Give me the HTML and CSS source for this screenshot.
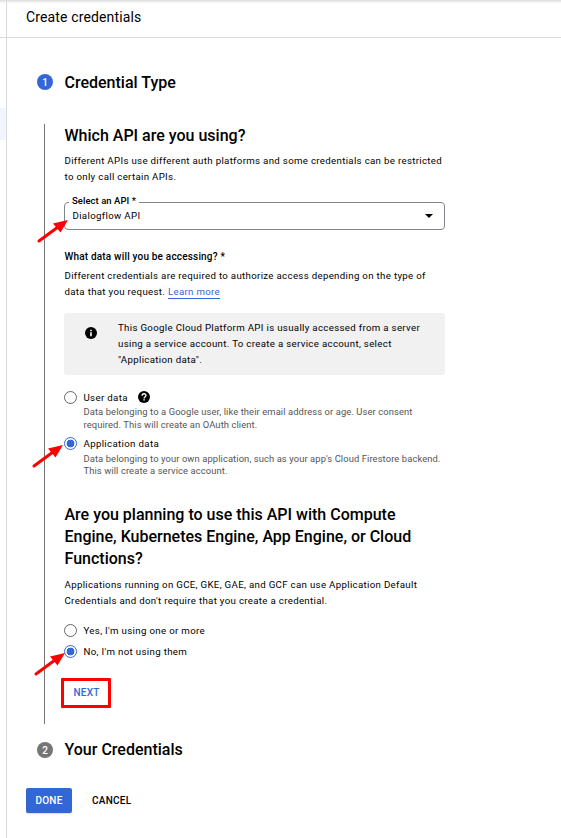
FILE: index.html
```html
<!DOCTYPE html>
<html lang="en">
<head>
<meta charset="utf-8">
<title>Create credentials</title>
<link rel="stylesheet" href="styles.css">
</head>
<body>
<div class="app">
  <aside class="rail"><div class="rail-head"></div><div class="rail-active"></div></aside>
  <main class="main">
    <header class="topbar"><h1>Create credentials</h1></header>
    <div class="step-head"><span class="badge">1</span><h2>Credential Type</h2></div>
    <section class="panel">
      <h2>Which API are you using?</h2>
      <p class="copy intro">Different APIs use different auth platforms and some credentials can be restricted<br>to only call certain APIs.</p>
      <div class="select">
        <span class="select-label">Select an API *</span>
        <span class="select-value">Dialogflow API</span>
        <svg class="caret" width="8" height="4" viewBox="0 0 8 4"><path d="M0 0h8L4 4z"/></svg>
        <svg class="arrow" width="34" height="27" viewBox="0 0 34 27"><path class="shaft" d="M3 24 22 10"/><path d="M32 3 24.500 15.500 17 6.500z"/></svg>
      </div>
      <h3>What data will you be accessing? *</h3>
      <p class="copy">Different credentials are required to authorize access depending on the type of<br>data that you request. <a class="link">Learn more</a></p>
      <div class="notice">
        <svg class="info" width="12" height="12" viewBox="0 0 12 12"><circle cx="6" cy="6" r="6"/><path fill="#fff" d="M5.200 2.700h1.600v1.500H5.200zM5.200 5.200h1.600v4H5.200z"/></svg>
        <p class="copy">This Google Cloud Platform API is usually accessed from a server<br>using a service account. To create a service account, select<br>"Application data".</p>
      </div>
      <div class="option">
        <span class="radio"></span>
        <div class="option-body">
          <div class="option-title">User data
            <svg class="help" width="12" height="12" viewBox="0 0 12 12"><circle cx="6" cy="6" r="6"/><path fill="none" stroke="#fff" stroke-width="1.300" d="M4.100 4.700C4.100 2.100 8 2.200 8 4.500 8 5.800 6.100 5.700 6.100 7.400"/><path fill="#fff" d="M5.400 8.200h1.400v1.400H5.400z"/></svg>
          </div>
          <p class="hint">Data belonging to a Google user, like their email address or age. User consent<br>required. This will create an OAuth client.</p>
        </div>
      </div>
      <div class="option second">
        <span class="radio on"></span>
        <div class="option-body">
          <div class="option-title">Application data</div>
          <p class="hint">Data belonging to your own application, such as your app's Cloud Firestore backend.<br>This will create a service account.</p>
        </div>
        <svg class="arrow" width="34" height="27" viewBox="0 0 34 27"><path class="shaft" d="M3 24 22 10"/><path d="M32 3 24.500 15.500 17 6.500z"/></svg>
      </div>
      <h2 class="question">Are you planning to use this API with Compute<br>Engine, Kubernetes Engine, App Engine, or Cloud<br>Functions?</h2>
      <p class="copy">Applications running on GCE, GKE, GAE, and GCF can use Application Default<br>Credentials and don't require that you create a credential.</p>
      <div class="option yes"><span class="radio"></span><div class="option-title">Yes, I'm using one or more</div></div>
      <div class="option no"><span class="radio on"></span><div class="option-title">No, I'm not using them</div>
        <svg class="arrow" width="34" height="27" viewBox="0 0 34 27"><path class="shaft" d="M3 24 22 10"/><path d="M32 3 24.500 15.500 17 6.500z"/></svg>
      </div>
      <button class="next">NEXT</button>
    </section>
    <div class="step-head last"><span class="badge idle">2</span><h2>Your Credentials</h2></div>
    <div class="actions"><button class="done">DONE</button><button class="cancel">CANCEL</button></div>
  </main>
</div>
</body>
</html>
```
FILE: styles.css
```css
* { box-sizing: border-box; }
body { margin: 0; background: #fff; color: #000; font-family: Roboto, "Liberation Sans", sans-serif; white-space: nowrap; }
h1, h2, h3, p { margin: 0; }
button { border: 0; padding: 0; background: none; font: 500 10px/16px Roboto, sans-serif; letter-spacing: .25px; }
.app { display: flex; height: 838px; overflow: hidden; background: linear-gradient(#dcdcdc, #f3f3f3 2px, #fff 4px); }
.rail { width: 7px; border-right: 1px solid #dadada; flex: none; }
.rail-head { height: 38px; border-bottom: 1px solid #dadada; }
.rail-active { height: 32px; margin-top: 70px; background: #f0f5ff; }
.main { flex: 1; }
.topbar { height: 38px; border-bottom: 1px solid #dadada; padding: 7px 0 0 19px; }
.topbar h1 { font-size: 14px; line-height: 20px; font-weight: 400; letter-spacing: .14px; }
h2 { font-size: 16px; line-height: 22px; font-weight: 500; }
.step-head { display: flex; align-items: center; height: 22px; margin: 33px 0 0 30px; gap: 11.500px; }
.step-head h2 { padding-top: 2px; }
.step-head.last { margin-top: 15px; }
.step-head.last h2 { padding-top: 0; }
.badge { width: 16px; height: 16px; border-radius: 50%; background: #3367d6; color: #fff; font-size: 10px; font-weight: 500; line-height: 17px; text-align: center; }
.badge.idle { background: #757575; }
.step-head.last .badge { margin-top: -1px; }
.panel { width: 401px; height: 600px; margin: 31px 0 0 37px; border-left: 1px solid #757575; padding: 1px 0 0 19px; }
.panel > h2 { padding-left: .5px; }
.copy { padding-left: .5px; font-size: 9.700px; line-height: 16px; letter-spacing: .315px; }
.intro { margin-top: 6px; }
.select { position: relative; display: flex; justify-content: space-between; align-items: center; height: 28px; margin-top: 17px; padding: 0 11px 0 7.500px; border: 1px solid #80868b; border-radius: 4px; }
.select-label { position: absolute; top: -9px; left: 4px; padding: 0 3px; background: #fff; font-size: 9.500px; line-height: 14px; font-weight: 500; letter-spacing: .05px; }
.select-value { font-size: 9.700px; line-height: 16px; letter-spacing: .33px; }
.arrow { position: absolute; fill: #f00; }
.shaft { stroke: #f00; stroke-width: 3; stroke-linecap: round; }
.select .arrow { left: -29px; top: 14px; }
h3 { margin-top: 19px; margin-bottom: 3px; padding-left: .5px; font-size: 10px; line-height: 16px; font-weight: 500; letter-spacing: .18px; }
.link { display: inline-block; height: 14px; line-height: 14px; color: #3367d6; border-bottom: 1px solid #3367d6; }
.notice { display: flex; height: 62px; margin-top: 13px; padding: 7px 0 0 21px; gap: 20.500px; background: #f1f1f1; border-radius: 3px; }
.info { margin-top: 7px; }
.option { position: relative; display: flex; gap: 6.500px; margin-top: 15px; }
.radio { width: 13px; height: 13px; margin-top: 1px; flex: none; border: 1px solid #666; border-radius: 50%; }
.radio.on { border-color: #3367d6; background: radial-gradient(circle, #3367d6 0 3.600px, #fff 4.200px); }
.option-title { display: flex; gap: 10.500px; align-items: center; font-size: 9.700px; line-height: 16px; letter-spacing: .33px; }
.help { position: relative; top: -1px; }
.hint { margin-top: -1px; font-size: 9.400px; line-height: 13px; letter-spacing: .1px; color: #555; }
.option.second { margin-top: 5px; }
.second .hint { line-height: 12px; margin-top: 1px; }
.second .arrow { left: -33px; top: 6px; }
.question { margin-top: 27px; margin-bottom: 7px; }
.option.yes { margin-top: 14px; }
.option.no { margin-top: 5px; }
.no .arrow { left: -31px; top: 6px; }
.next { display: block; width: 50px; height: 30px; margin: 18px 0 0 -3px; padding-left: 1px; border: 3px solid #f00; border-radius: 1px; color: #3367d6; }
.actions { display: flex; align-items: center; gap: 20px; margin: 27px 0 0 19px; }
.done { width: 46px; height: 25px; border-radius: 2px; background: #3367d6; color: #fff; box-shadow: 0 1px 1px #ddd; }
```
